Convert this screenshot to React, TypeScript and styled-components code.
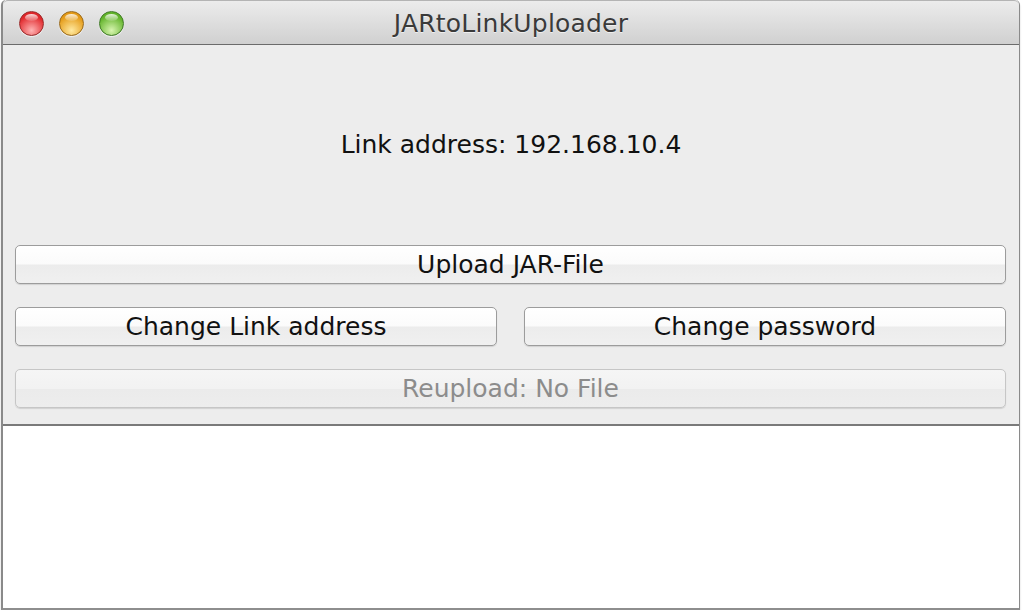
import React from "react";
import styled, { createGlobalStyle } from "styled-components";

const Global = createGlobalStyle`
  html, body { margin: 0; padding: 0; background: #ffffff; }
  body { font-family: "DejaVu Sans", "Liberation Sans", sans-serif; }
`;

const Window = styled.div`
  box-sizing: border-box;
  margin-left: 1px;
  width: 1019px;
  height: 610px;
  display: flex;
  flex-direction: column;
  border: 1px solid #8a8a8a;
  border-left-width: 2px;
  border-bottom: 2px solid #8e8e8e;
  border-top: none;
  border-radius: 5px 5px 0 0;
  overflow: hidden;
  box-shadow: 0 2px 2px rgba(0, 0, 0, 0.2);
`;

const TitleBar = styled.div`
  position: relative;
  box-sizing: border-box;
  height: 45px;
  flex: none;
  display: flex;
  align-items: center;
  justify-content: center;
  background: linear-gradient(#ececec, #d0d0d0);
  border-top: 1px solid #b4b4b4;
  border-bottom: 1px solid #6b6b6b;
  border-radius: 5px 5px 0 0;
`;

const Lights = styled.div`
  position: absolute;
  left: 16px;
  top: 10px;
  display: flex;
  gap: 15px;
`;

const Light = styled.div<{ $c1: string; $c2: string; $edge: string }>`
  width: 25px;
  height: 25px;
  border-radius: 50%;
  box-sizing: border-box;
  border: 1px solid ${(p) => p.$edge};
  background: radial-gradient(circle at 50% 80%, ${(p) => p.$c1} 0%, ${(p) => p.$c2} 70%);
  position: relative;
  box-shadow: 0 1px 1px rgba(255, 255, 255, 0.7);
  &::after {
    content: "";
    position: absolute;
    left: 5px;
    top: 2px;
    width: 13px;
    height: 7px;
    border-radius: 50%;
    background: linear-gradient(rgba(255, 255, 255, 0.85), rgba(255, 255, 255, 0.1));
  }
`;

const Title = styled.div`
  font-size: 25px;
  color: #3a3a3a;
  text-shadow: 0 1px 0 rgba(255, 255, 255, 0.6);
  letter-spacing: 0.2px;
  margin-top: 2px;
`;

const Body = styled.div`
  flex: none;
  height: 381px;
  background: #ededed;
  display: flex;
  flex-direction: column;
  border-bottom: 2px solid #7a7a7a;
  box-sizing: border-box;
`;

const LabelArea = styled.div`
  height: 200px;
  flex: none;
  display: flex;
  align-items: center;
  justify-content: center;
  font-size: 25px;
  color: #111;
  padding-bottom: 2px;
  box-sizing: border-box;
`;

const Buttons = styled.div`
  display: flex;
  flex-direction: column;
  gap: 23px;
  padding: 0 13px 0 12px;
`;

const Row = styled.div`
  display: flex;
  gap: 27px;
`;

const Button = styled.button<{ $disabled?: boolean; $grow?: boolean }>`
  flex: ${(p) => (p.$grow ? "1 1 0" : "none")};
  height: 39px;
  box-sizing: border-box;
  border-radius: 5px;
  border: 1px solid ${(p) => (p.$disabled ? "#c6c6c6" : "#9c9c9c")};
  background: ${(p) =>
    p.$disabled
      ? "linear-gradient(#f5f5f5 0%, #f2f2f2 50%, #ebebeb 52%, #ededed 100%)"
      : "linear-gradient(#ffffff 0%, #fbfbfb 48%, #ececec 52%, #f0f0f0 100%)"};
  box-shadow: 0 1px 1px rgba(0, 0, 0, 0.12);
  font-family: "DejaVu Sans", "Liberation Sans", sans-serif;
  font-size: 25px;
  color: ${(p) => (p.$disabled ? "#8c8c8c" : "#111")};
  padding: 0 0 1px 0;
  display: flex;
  align-items: center;
  justify-content: center;
`;

const Output = styled.div`
  flex: 1;
  background: #ffffff;
`;

export default function App() {
  return (
    <>
      <Global />
      <Window>
        <TitleBar>
          <Lights>
            <Light $c1="#ffb3b3" $c2="#e0262a" $edge="#9a2a2a" />
            <Light $c1="#ffe9a0" $c2="#e49a16" $edge="#9a6a1a" />
            <Light $c1="#d8f5b0" $c2="#62b32a" $edge="#3f7a26" />
          </Lights>
          <Title>JARtoLinkUploader</Title>
        </TitleBar>
        <Body>
          <LabelArea>Link address: 192.168.10.4</LabelArea>
          <Buttons>
            <Button>Upload JAR-File</Button>
            <Row>
              <Button $grow>Change Link address</Button>
              <Button $grow>Change password</Button>
            </Row>
            <Button $disabled>Reupload: No File</Button>
          </Buttons>
        </Body>
        <Output />
      </Window>
    </>
  );
}
